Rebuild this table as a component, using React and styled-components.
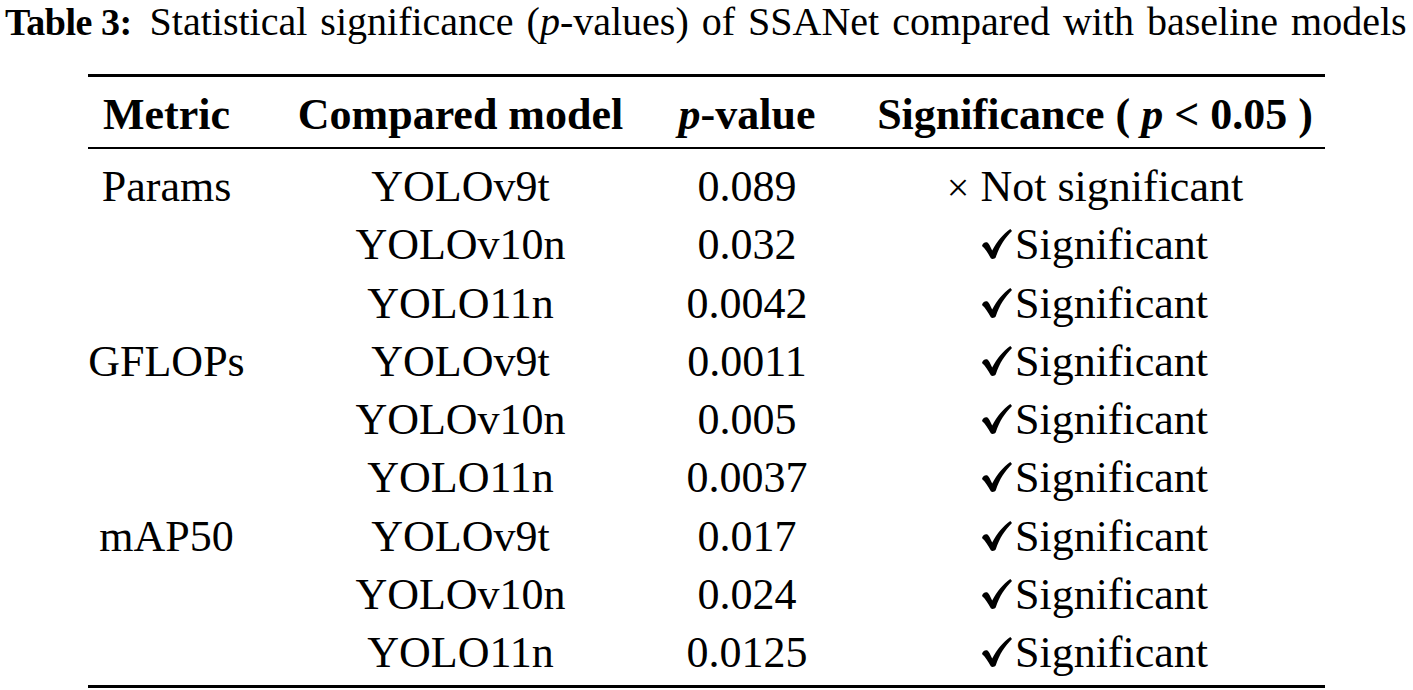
import React from "react";
import styled, { createGlobalStyle } from "styled-components";

const rows = [
    { metric: "Params", model: "YOLOv9t", p: "0.089", significant: false },
    { metric: "", model: "YOLOv10n", p: "0.032", significant: true },
    { metric: "", model: "YOLO11n", p: "0.0042", significant: true },
    { metric: "GFLOPs", model: "YOLOv9t", p: "0.0011", significant: true },
    { metric: "", model: "YOLOv10n", p: "0.005", significant: true },
    { metric: "", model: "YOLO11n", p: "0.0037", significant: true },
    { metric: "mAP50", model: "YOLOv9t", p: "0.017", significant: true },
    { metric: "", model: "YOLOv10n", p: "0.024", significant: true },
    { metric: "", model: "YOLO11n", p: "0.0125", significant: true },
];

// calligraphic check mark, as in amssymb \checkmark
const CheckMark = () => (
    <CheckIcon viewBox="0 0 30 30" width="30" height="30" aria-label="✓">
        <path d="M0 17 C0.5 14 3.5 12.5 5.5 13.5 C7 14.5 8.5 18 10.2 21.5 C15 12.5 21 5 28.3 0 L30 2 C23 9 17.5 17 13.8 28.3 C13 30 9.8 30.6 8.8 29.2 C6.5 25 3.5 20 0 17 Z" />
    </CheckIcon>
);

const App = () => {
    return (
        <>
            <GlobalStyle />
            <Page>
                <Caption>
                    <CaptionLabel>Table 3:</CaptionLabel>
                    Statistical significance (<i>p</i>-values) of SSANet compared with baseline models
                </Caption>
                <Table>
                    <HeadRow>
                        <Cell>Metric</Cell>
                        <Cell>Compared model</Cell>
                        <Cell><i>p</i>-value</Cell>
                        <Cell>Significance ( <i>p</i> &lt; 0.05 )</Cell>
                    </HeadRow>
                    <Body>
                        {rows.map((row, i) => (
                            <Row key={i}>
                                <Cell>{row.metric}</Cell>
                                <Cell>{row.model}</Cell>
                                <Cell>{row.p}</Cell>
                                <Cell>
                                    {row.significant ? (
                                        <><CheckMark />Significant</>
                                    ) : (
                                        <><Cross>×</Cross> Not significant</>
                                    )}
                                </Cell>
                            </Row>
                        ))}
                    </Body>
                </Table>
            </Page>
        </>
    );
}

const GlobalStyle = createGlobalStyle`
    html, body {
        margin: 0;
        padding: 0;
        background: #ffffff;
    }
`;

const Page = styled.div`
    width: 1413px;
    height: 690px;
    overflow: hidden;
    color: #000;
    font-family: "Liberation Serif", "Times New Roman", serif;
`;

const Caption = styled.div`
    padding-left: 5px;
    font-size: 40px;
    line-height: 44px;
    word-spacing: 3px;
    white-space: nowrap;
`;

const CaptionLabel = styled.b`
    font-size: 38px;
    letter-spacing: -0.5px;
    word-spacing: 0;
    margin-right: 18px;
`;

const Table = styled.div`
    width: 1237px;
    margin: 30px 0 0 88px;
`;

const columns = `
    display: grid;
    grid-template-columns: 157px 335px 142px 458px;
    column-gap: 48px;
    justify-items: center;
    font-size: 44px;
    white-space: nowrap;
`;

const HeadRow = styled.div`
    ${columns}
    line-height: 58px;
    font-weight: bold;
    padding: 9px 0 3px;
    border-top: 3px solid #000;
    border-bottom: 2px solid #000;
`;

const Body = styled.div`
    padding: 9px 0 2px;
    border-bottom: 3px solid #000;
`;

const Row = styled.div`
    ${columns}
    line-height: 58.3px;
`;

const Cell = styled.div`
    text-align: center;
`;

const CheckIcon = styled.svg`
    fill: #000;
    margin-right: 3px;
    vertical-align: baseline;
`;

const Cross = styled.span`
    font-size: 40px;
    line-height: 1;
`;

export default App;
